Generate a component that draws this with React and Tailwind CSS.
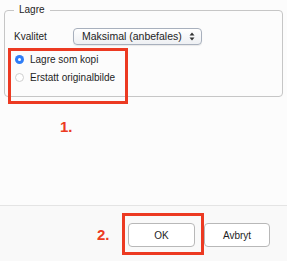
import React from 'react';

function Radio({ checked, label }) {
  return (
    <label className="flex items-center h-[14px]">
      {checked ? (
        <span className="w-[9px] h-[9px] rounded-full bg-[#2f7df6] flex items-center justify-center">
          <span className="w-[3px] h-[3px] rounded-full bg-white" />
        </span>
      ) : (
        <span className="w-[9px] h-[9px] rounded-full bg-white border border-[#cfcfcf]" />
      )}
      <span className="ml-[6px]">{label}</span>
    </label>
  );
}

export default function App() {
  return (
    <div className="relative w-[287px] h-[261px] bg-[#fcfcfc] flex flex-col font-['Liberation_Sans',Arial,sans-serif] text-[10px] text-[#1e1e1e]">
      <div className="flex-1 px-[4px] pt-[4px]">
        <fieldset className="border border-[#c6c6c6] rounded-[4px] h-[93px] pl-[9px] pr-2">
          <legend className="px-[5px] leading-[12px]">Lagre</legend>
          <div className="flex items-center h-[17px] mt-[12px]">
            <span className="w-[59px]">Kvalitet</span>
            <div className="w-[129px] h-[17px] flex items-center justify-between pl-[8px] pr-[6px] rounded-[4px] border border-[#a8b0bd] bg-gradient-to-b from-white to-[#eef0f3] shadow-[0_1px_1px_rgba(0,0,0,0.08)] text-[10.5px]">
              <span>Maksimal (anbefales)</span>
              <svg width="6" height="9" viewBox="0 0 6 9">
                <path d="M3 0.5 L5.5 3.5 H0.5 Z" fill="#333" />
                <path d="M3 8.5 L5.5 5.5 H0.5 Z" fill="#333" />
              </svg>
            </div>
          </div>
          <div className="flex flex-col gap-[4px] mt-[7px] pl-[1px]">
            <Radio checked label="Lagre som kopi" />
            <Radio label="Erstatt originalbilde" />
          </div>
        </fieldset>
      </div>
      <div className="h-[56px] border-t border-[#e4e4e4] bg-[#f9f9f9] flex justify-end gap-[9px] pt-[17px] pr-[17px]">
        <button className="w-[67px] h-[24px] rounded-[4px] border border-[#b8b8b8] bg-white text-[10px]">OK</button>
        <button className="w-[66px] h-[24px] rounded-[4px] border border-[#b8b8b8] bg-white text-[10px]">Avbryt</button>
      </div>

      {/* annotations */}
      <div className="absolute left-[8px] top-[48px] w-[120px] h-[56px] border-[3px] border-[#ec3a22]" />
      <div className="absolute left-[60px] top-[116px] text-[15px] font-bold text-[#ec3a22]">1.</div>
      <div className="absolute left-[122px] top-[213px] w-[82px] h-[42px] border-[3px] border-[#ec3a22]" />
      <div className="absolute left-[97px] top-[224px] text-[15px] font-bold text-[#ec3a22]">2.</div>
    </div>
  );
}
